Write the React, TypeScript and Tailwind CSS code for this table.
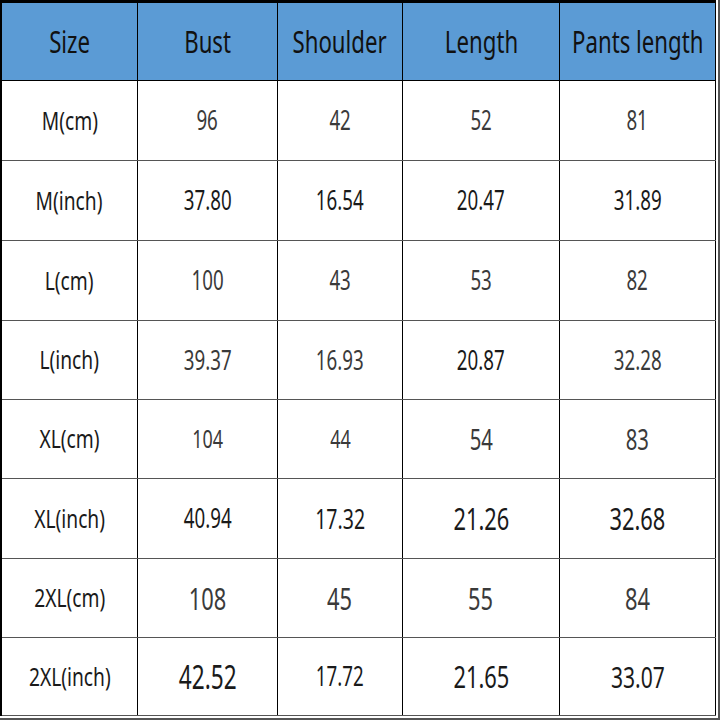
import React from "react";

type Cell = { t: string; s: number; c?: string };

const headers = ["Size", "Bust", "Shoulder", "Length", "Pants length"];
const colW = ["w-[136px]", "w-[140px]", "w-[125px]", "w-[157px]", "w-[156px]"];
const rowH = ["h-[80px]", "h-[80px]", "h-[80px]", "h-[79px]", "h-[79px]", "h-[80px]", "h-[79px]", "h-[78px]"];

const G = "#3a3a3a";
const B = "#1a1a1a";

const rows: Cell[][] = [
  [{ t: "M(cm)", s: 23, c: B }, { t: "96", s: 24, c: G }, { t: "42", s: 24, c: G }, { t: "52", s: 24, c: G }, { t: "81", s: 24, c: G }],
  [{ t: "M(inch)", s: 23, c: B }, { t: "37.80", s: 24, c: B }, { t: "16.54", s: 24, c: B }, { t: "20.47", s: 24, c: B }, { t: "31.89", s: 24, c: B }],
  [{ t: "L(cm)", s: 23, c: B }, { t: "100", s: 24, c: G }, { t: "43", s: 24, c: G }, { t: "53", s: 24, c: G }, { t: "82", s: 24, c: G }],
  [{ t: "L(inch)", s: 23, c: B }, { t: "39.37", s: 24, c: G }, { t: "16.93", s: 24, c: G }, { t: "20.87", s: 24, c: B }, { t: "32.28", s: 24, c: G }],
  [{ t: "XL(cm)", s: 23, c: B }, { t: "104", s: 23, c: G }, { t: "44", s: 23, c: G }, { t: "54", s: 26, c: G }, { t: "83", s: 26, c: G }],
  [{ t: "XL(inch)", s: 23, c: B }, { t: "40.94", s: 24, c: B }, { t: "17.32", s: 25, c: B }, { t: "21.26", s: 28, c: B }, { t: "32.68", s: 28, c: B }],
  [{ t: "2XL(cm)", s: 23, c: B }, { t: "108", s: 28, c: G }, { t: "45", s: 28, c: G }, { t: "55", s: 28, c: G }, { t: "84", s: 28, c: G }],
  [{ t: "2XL(inch)", s: 23, c: B }, { t: "42.52", s: 29, c: B }, { t: "17.72", s: 24, c: B }, { t: "21.65", s: 28, c: B }, { t: "33.07", s: 27, c: B }],
];

export default function App() {
  return (
    <div
      className="w-[720px] h-[720px] bg-white overflow-hidden"
      style={{ fontFamily: '"Noto Sans", "Open Sans", sans-serif' }}
    >
      <div className="w-[720px] h-[720px] border-r-2 border-b-2 border-[#555] bg-white">
        <div className="w-[716px] border-t-[3px] border-l-2 border-black">
          <div className="flex h-[78px] bg-[#5b9bd5] border-b border-black">
            {headers.map((h, i) => (
              <div
                key={h}
                className={`${colW[i]} h-full flex items-center justify-center border-r border-black`}
              >
                <span className="inline-block scale-x-[0.74] text-[30px] leading-none text-[#111] whitespace-nowrap">
                  {h}
                </span>
              </div>
            ))}
          </div>
          {rows.map((r, ri) => (
            <div key={ri} className={`flex ${rowH[ri]} border-b border-[#555]`}>
              {r.map((c, ci) => (
                <div
                  key={ci}
                  className={`${colW[ci]} h-full flex items-center justify-center border-r border-black`}
                >
                  {ci === 0 ? (
                    <span
                      className="inline-block scale-x-[0.76] leading-none whitespace-nowrap"
                      style={{ fontSize: `${c.s * 1.1}px`, color: c.c }}
                    >
                      {c.t}
                    </span>
                  ) : (
                    <span
                      className="inline-block scale-x-[0.71] leading-none whitespace-nowrap"
                      style={{ fontSize: `${c.s * 1.1}px`, color: c.c }}
                    >
                      {c.t}
                    </span>
                  )}
                </div>
              ))}
            </div>
          ))}
        </div>
      </div>
    </div>
  );
}
